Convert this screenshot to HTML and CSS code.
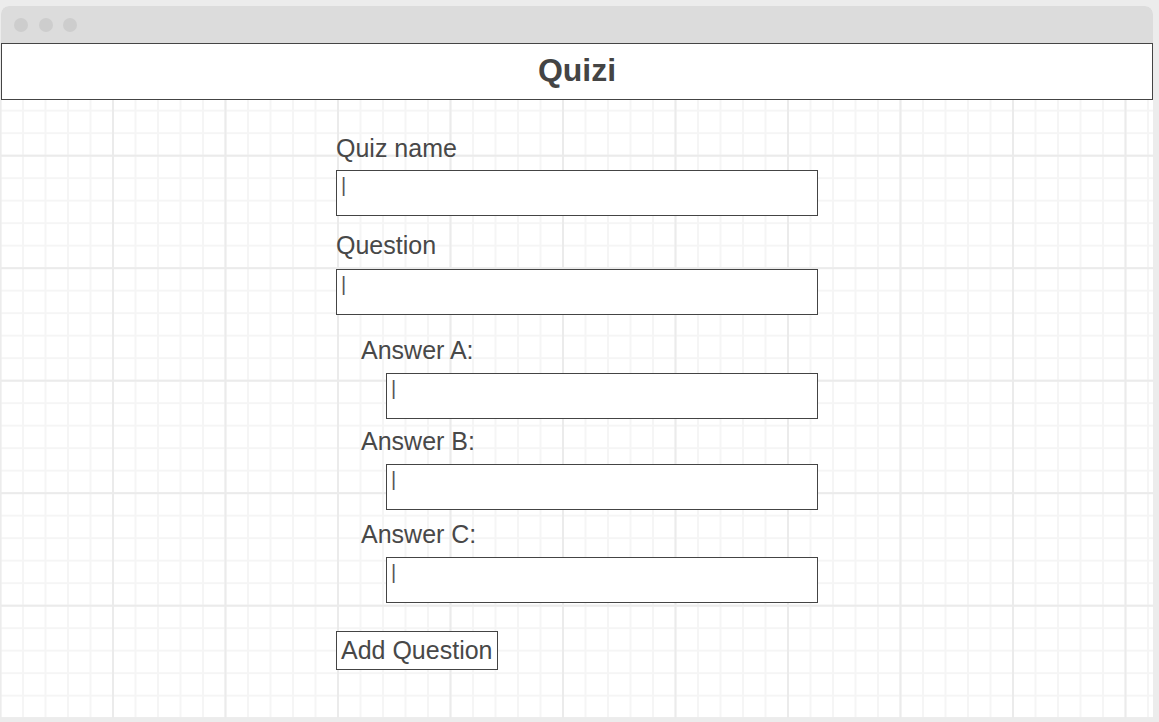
FILE: index.html
```html
<!DOCTYPE html>
<html lang="en">
<head>
<meta charset="utf-8">
<title>Quizi</title>
<link rel="stylesheet" href="styles.css">
</head>
<body>
<div class="window">
  <div class="titlebar">
    <span class="dot"></span><span class="dot"></span><span class="dot"></span>
  </div>
  <header class="header"><h1 class="title">Quizi</h1></header>
  <main class="canvas">
    <form class="form">
      <label class="label label-quiz">Quiz name</label>
      <div class="field field-quiz"><span class="cursor">|</span></div>
      <label class="label label-question">Question</label>
      <div class="field field-question"><span class="cursor">|</span></div>
      <div class="answers">
        <label class="label answer-label">Answer A:</label>
        <div class="field answer-field"><span class="cursor">|</span></div>
        <label class="label answer-label">Answer B:</label>
        <div class="field answer-field answer-field-b"><span class="cursor">|</span></div>
        <label class="label answer-label">Answer C:</label>
        <div class="field answer-field"><span class="cursor">|</span></div>
      </div>
      <div class="actions"><button type="button" class="btn">Add Question</button></div>
    </form>
  </main>
</div>
</body>
</html>
```

FILE: styles.css
```css
* { box-sizing: border-box; }
html, body { margin: 0; padding: 0; }
body {
  background: #ececec;
  width: 1159px;
  height: 722px;
  overflow: hidden;
  font-family: "Liberation Sans", Arial, sans-serif;
  color: #484848;
  padding: 6px 0 0 1px;
}
.window {
  width: 1152px;
  height: 712px;
  display: flex;
  flex-direction: column;
  border-radius: 8px 8px 0 0;
  overflow: hidden;
  background: #fff;
}
.titlebar {
  height: 37px;
  flex: none;
  background: #dcdcdc;
  display: flex;
  align-items: center;
  gap: 10.5px;
  padding: 0 0 0 13px;
}
.dot {
  width: 14px;
  height: 14px;
  border-radius: 50%;
  background: #cdcdcd;
}
.header {
  height: 57px;
  flex: none;
  border: 1px solid #444;
  background: #fff;
  display: flex;
  align-items: center;
  justify-content: center;
}
.title {
  margin: 0;
  font-size: 32px;
  font-weight: bold;
  line-height: 38px;
  color: #444;
  padding-bottom: 3px;
}
.canvas {
  flex: 1;
  background-color: #fff;
  background-image:
    linear-gradient(to right, #ebebeb 0, #ebebeb 2px, transparent 2px),
    linear-gradient(to bottom, #ebebeb 0, #ebebeb 2px, transparent 2px),
    linear-gradient(to right, #f5f5f5 0, #f5f5f5 2px, transparent 2px),
    linear-gradient(to bottom, #f5f5f5 0, #f5f5f5 2px, transparent 2px);
  background-size: 112.5px 112.5px, 112.5px 112.5px, 22.5px 22.5px, 22.5px 22.5px;
  background-position: -1.5px 54.7px, -1.5px 54.7px, -1.5px 9.7px, -1.5px 9.7px;
}
.form {
  width: 482px;
  margin: 0 auto;
  padding-top: 33px;
  display: flex;
  flex-direction: column;
  align-items: flex-start;
}
.label {
  display: block;
  font-size: 25px;
  line-height: 30px;
  height: 30px;
  color: #484848;
}
.field {
  width: 482px;
  height: 46px;
  border: 1px solid #444;
  background: #fff;
  padding: 3px 4px 0;
}
.cursor {
  display: block;
  font-size: 20px;
  line-height: 23px;
  color: #555;
}
.label-quiz { margin-bottom: 7px; }
.field-quiz { margin-bottom: 14px; }
.label-question { margin-bottom: 9px; }
.answers {
  display: flex;
  flex-direction: column;
  align-items: flex-start;
  padding-left: 25px;
  margin-top: 20px;
}
.answer-label { margin-bottom: 8px; }
.answer-field {
  width: 432px;
  margin-left: 25px;
  margin-bottom: 7px;
}
.answer-field-b { margin-bottom: 9px; }
.actions { margin-top: 21px; }
.btn {
  font-family: "Liberation Sans", Arial, sans-serif;
  font-size: 25px;
  line-height: 35px;
  height: 39px;
  color: #484848;
  background: #fff;
  border: 1px solid #444;
  border-radius: 0;
  padding: 1px 4px 1px;
  margin: 0;
}
```
